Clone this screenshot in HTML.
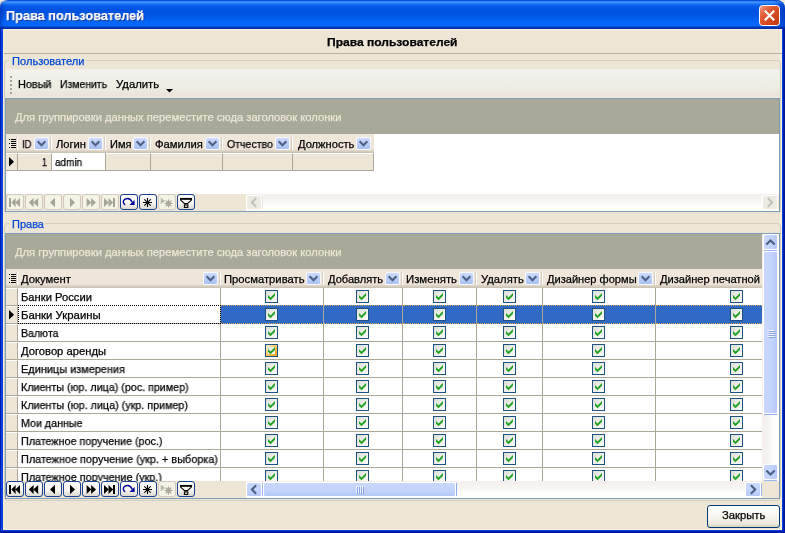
<!DOCTYPE html>
<html><head><meta charset="utf-8"><title>Права пользователей</title>
<style>
html,body{margin:0;padding:0;}
body{width:785px;height:533px;overflow:hidden;position:relative;background:#0a3fe4;font-family:"Liberation Sans",sans-serif;font-size:11px;color:#000;}
div,span,svg{position:absolute;box-sizing:border-box;}
.t{white-space:nowrap;line-height:13px;height:13px;transform-origin:0 0;will-change:transform;-webkit-text-stroke:0.25px currentColor;}
#corner{left:0;top:0;width:785px;height:10px;background:#f0eedf;}
#title{left:0;top:0;width:785px;height:29px;border-radius:8px 8px 0 0;background:linear-gradient(#0a4fd8 0,#0a4fd8 1px,#2f84f8 1.5px,#3a90ff 2.5px,#1c72f4 4px,#0a63ee 5px,#0358e6 7px,#0053e0 11px,#0055e4 15px,#025ef0 19px,#0468fa 23px,#0566f8 25.5px,#0050dc 26.5px,#0038b8 27.5px,#002a9e 29px);}
#title:after{content:"";position:absolute;right:0;top:0;width:12px;height:29px;border-radius:0 8px 0 0;background:linear-gradient(90deg,rgba(0,40,170,0),rgba(0,40,170,.55));}
#title:before{content:"";position:absolute;left:0;top:0;width:5px;height:29px;border-radius:8px 0 0 0;background:linear-gradient(90deg,rgba(0,40,170,.5),rgba(0,40,170,0));}
#client{left:3px;top:29px;width:779px;height:501px;background:#ede5d6;border-left:1px solid #f6ecd0;border-top:1px solid #f6f0de;border-right:2px solid #faf1d8;border-bottom:1px solid #f7eeda;}
.grid{background:#fff;border:1px solid #7f9db9;overflow:hidden;}
.gp{left:0;top:0;height:35px;background-color:#a9a999;}
.gpt{color:#ebe5d6;}
.hdr{background:linear-gradient(#eee7da 0,#ede5d8 15px,#d9d2c4 17px,#c5c0b0 19px);height:19px;}
.hs{width:2px;height:13px;background:linear-gradient(90deg,#d3ccbf 0 1px,#fff 1px 2px);}
.cell{border-right:1px solid #aca899;border-bottom:1px solid #aca899;height:18px;background:#fff;}
.ind{background:#ede5d6;border-top:1px solid #fff;}
.nb{width:18px;height:16px;border:1px solid #d2c9bd;border-radius:3px;background:#f4f3e6;}
.nb.on{border:1px solid #1a4190;background:linear-gradient(#fff 0%,#f4f3ee 60%,#dddad0 100%);}
.sbb{width:16px;height:16px;border:1px solid #fff;border-radius:2px;}
.blue{background:linear-gradient(135deg,#cbd9fd,#b3c6f6);}
.dis{background:#eceae2;}
</style></head><body>
<svg width="0" height="0" style="position:absolute"><defs>
<linearGradient id="cbg" x1="0" y1="0" x2="1" y2="1"><stop offset="0" stop-color="#dcdcd5"/><stop offset="1" stop-color="#ffffff"/></linearGradient>
<linearGradient id="ddg" x1="0" y1="0" x2="0" y2="1"><stop offset="0" stop-color="#cddbfb"/><stop offset="1" stop-color="#a9c1f2"/></linearGradient>
<pattern id="dots" x="0" y="0" width="8" height="8" patternUnits="userSpaceOnUse"><rect x="2" y="3" width="1" height="1" fill="#b3b3a3"/></pattern>
<linearGradient id="sbv" x1="0" y1="0" x2="1" y2="0"><stop offset="0" stop-color="#c9d7fc"/><stop offset="0.6" stop-color="#c3d3fc"/><stop offset="1" stop-color="#b4c7f7"/></linearGradient>
<linearGradient id="sbh" x1="0" y1="0" x2="0" y2="1"><stop offset="0" stop-color="#c9d7fc"/><stop offset="0.6" stop-color="#c3d3fc"/><stop offset="1" stop-color="#b4c7f7"/></linearGradient>
<linearGradient id="hotg" x1="0" y1="0" x2="1" y2="1"><stop offset="0" stop-color="#fff0c8"/><stop offset="0.5" stop-color="#fbc95c"/><stop offset="1" stop-color="#f5a822"/></linearGradient>
<linearGradient id="xg" x1="0" y1="0" x2="1" y2="1"><stop offset="0" stop-color="#f0a08a"/><stop offset="0.35" stop-color="#e25a34"/><stop offset="1" stop-color="#bd340e"/></linearGradient>
</defs></svg>
<div id="corner"></div>
<div id="title"></div>

<div class="t " id="ttxt" style="left:6.2px;top:8px;transform:scaleX(0.9429);color:#fff;font-weight:bold;font-size:13.5px;line-height:16px;height:16px;text-shadow:1px 1px 0 #0a2a90;">Права пользователей</div>
<div id="client"></div>
<div style="left:0;top:29px;width:1px;height:504px;background:#001fae;"></div>
<div style="left:783px;top:29px;width:2px;height:504px;background:linear-gradient(90deg,#0024b4,#00148e);"></div>
<div style="left:0;top:531px;width:785px;height:2px;background:linear-gradient(#0024b4,#00148e);"></div>
<svg style="left:759px;top:5px" width="21" height="21" viewBox="0 0 21 21"><rect x="0.5" y="0.5" width="20" height="20" rx="3" fill="url(#xg)" stroke="#fff"/><path d="M5.8 5.8 L15.2 15.2 M15.2 5.8 L5.8 15.2" stroke="#fff" stroke-width="2.1"/></svg>
<div class="t " id="hp" style="left:326.5px;top:36px;transform:scaleX(1.0943);font-weight:bold;">Права пользователей</div>
<div style="left:4px;top:53px;width:778px;height:1px;background:#b4b4a0;"></div>
<div style="left:4px;top:60px;width:777px;height:154px;border:1px solid #d0d0bf;border-bottom-color:#e4e0d2;border-radius:4px;"></div>
<div style="left:9px;top:58px;width:77px;height:5px;background:#ede5d6;"></div>
<div class="t " id="g1" style="left:11.5px;top:55px;transform:scaleX(1.0098);color:#0046d5;">Пользователи</div>
<div style="left:6px;top:69px;width:774px;height:29px;background:linear-gradient(#f0ede6 0%,#f2f2ec 10%,#efefe7 35%,#ededE2 65%,#ebe6db 85%,#ebe3d9 93%,#f1ede5 100%);"></div>
<div style="left:10px;top:76px;width:2px;height:18px;background:repeating-linear-gradient(#a5a392 0 2px,transparent 2px 4px);"></div>
<div class="t " id="tb1" style="left:18.3px;top:78px;transform:scaleX(0.9833);">Новый</div>
<div class="t " id="tb2" style="left:60px;top:78px;transform:scaleX(0.9471);">Изменить</div>
<div class="t " id="tb3" style="left:116px;top:78px;transform:scaleX(1.0286);">Удалить</div>
<svg style="left:166px;top:89px" width="7" height="4"><path d="M0 0 H7 L3.5 3.5Z" fill="#000"/></svg>
<div class="grid" style="left:5px;top:98px;width:775px;height:114px;">
<div class="gp" style="width:773px;"><svg width="773" height="35" style="left:0;top:0"><rect width="773" height="35" fill="url(#dots)"/></svg></div>
<div class="hdr" style="left:0;top:35px;width:368px;"></div>
</div>
<div class="t gpt" id="gp1" style="left:15px;top:111px;transform:scaleX(1.0164);">Для группировки данных переместите сюда заголовок колонки</div>
<svg style="left:9px;top:139px" width="7" height="9"><path d="M0 0.5h1M0 4.5h1M0 8.5h1M2 0.5h5M2 2.5h5M2 4.5h5M2 6.5h5M2 8.5h5" stroke="#000"/></svg>
<div class="cell ind" style="left:6px;top:153px;width:12px;"></div>
<div class="hs" style="left:16px;top:137px;"></div>
<div class="t " id="h1_1" style="left:21.6px;top:138px;transform:scaleX(0.8545);">ID</div>
<svg style="left:34px;top:137px" width="15" height="13" viewBox="0 0 15 13"><rect x="0" y="0" width="15" height="13" rx="2" fill="#f6f8fd"/><rect x="1" y="1" width="13" height="11" rx="1.5" fill="url(#ddg)"/><path d="M3.6 4.3 L7.5 8.2 L11.4 4.3" fill="none" stroke="#4d6185" stroke-width="2.1"/></svg>
<div class="cell ind" style="left:18px;top:153px;width:34px;"></div>
<div class="hs" style="left:50px;top:137px;"></div>
<div class="t " id="h1_2" style="left:56px;top:138px;transform:scaleX(1.0143);">Логин</div>
<svg style="left:88px;top:137px" width="15" height="13" viewBox="0 0 15 13"><rect x="0" y="0" width="15" height="13" rx="2" fill="#f6f8fd"/><rect x="1" y="1" width="13" height="11" rx="1.5" fill="url(#ddg)"/><path d="M3.6 4.3 L7.5 8.2 L11.4 4.3" fill="none" stroke="#4d6185" stroke-width="2.1"/></svg>
<div class="cell" style="left:52px;top:153px;width:54px;"></div>
<div class="hs" style="left:104px;top:137px;"></div>
<div class="t " id="h1_3" style="left:109.5px;top:138px;transform:scaleX(1.0029);">Имя</div>
<svg style="left:133px;top:137px" width="15" height="13" viewBox="0 0 15 13"><rect x="0" y="0" width="15" height="13" rx="2" fill="#f6f8fd"/><rect x="1" y="1" width="13" height="11" rx="1.5" fill="url(#ddg)"/><path d="M3.6 4.3 L7.5 8.2 L11.4 4.3" fill="none" stroke="#4d6185" stroke-width="2.1"/></svg>
<div class="cell ind" style="left:106px;top:153px;width:45px;"></div>
<div class="hs" style="left:149px;top:137px;"></div>
<div class="t " id="h1_4" style="left:154.6px;top:138px;transform:scaleX(1.0253);">Фамилия</div>
<svg style="left:205px;top:137px" width="15" height="13" viewBox="0 0 15 13"><rect x="0" y="0" width="15" height="13" rx="2" fill="#f6f8fd"/><rect x="1" y="1" width="13" height="11" rx="1.5" fill="url(#ddg)"/><path d="M3.6 4.3 L7.5 8.2 L11.4 4.3" fill="none" stroke="#4d6185" stroke-width="2.1"/></svg>
<div class="cell ind" style="left:151px;top:153px;width:72px;"></div>
<div class="hs" style="left:221px;top:137px;"></div>
<div class="t " id="h1_5" style="left:226.7px;top:138px;transform:scaleX(0.9597);">Отчество</div>
<svg style="left:275px;top:137px" width="15" height="13" viewBox="0 0 15 13"><rect x="0" y="0" width="15" height="13" rx="2" fill="#f6f8fd"/><rect x="1" y="1" width="13" height="11" rx="1.5" fill="url(#ddg)"/><path d="M3.6 4.3 L7.5 8.2 L11.4 4.3" fill="none" stroke="#4d6185" stroke-width="2.1"/></svg>
<div class="cell ind" style="left:223px;top:153px;width:70px;"></div>
<div class="hs" style="left:291px;top:137px;"></div>
<div class="t " id="h1_6" style="left:297.6px;top:138px;transform:scaleX(1.0128);">Должность</div>
<svg style="left:356px;top:137px" width="15" height="13" viewBox="0 0 15 13"><rect x="0" y="0" width="15" height="13" rx="2" fill="#f6f8fd"/><rect x="1" y="1" width="13" height="11" rx="1.5" fill="url(#ddg)"/><path d="M3.6 4.3 L7.5 8.2 L11.4 4.3" fill="none" stroke="#4d6185" stroke-width="2.1"/></svg>
<div class="cell ind" style="left:293px;top:153px;width:81px;"></div>
<svg style="left:9px;top:157px" width="6" height="10"><path d="M0 0 L5 4.7 L0 9.4Z" fill="#000"/></svg>
<div class="t " id="c_1" style="left:42px;top:156px;transform:scaleX(0.8163);">1</div>
<div class="t " id="c_admin" style="left:54.8px;top:156px;transform:scaleX(0.9076);">admin</div>
<div style="left:6px;top:194px;width:240px;height:17px;background:#ede5d6;"></div>
<div class="nb" style="left:6px;top:194px;"><svg style="left:-1px;top:-1px" width="18" height="16" viewBox="0 0 18 16" fill="#a6a594"><rect x="3" y="4" width="2" height="9"/><path d="M5.3 8.5 L9.6 4 V13Z"/><path d="M9.3 8.5 L14 4 V13Z"/></svg></div>
<div class="nb" style="left:25px;top:194px;"><svg style="left:-1px;top:-1px" width="18" height="16" viewBox="0 0 18 16" fill="#a6a594"><path d="M3.8 8.5 L8.6 4 V13Z"/><path d="M8.3 8.5 L13.2 4 V13Z"/></svg></div>
<div class="nb" style="left:44px;top:194px;"><svg style="left:-1px;top:-1px" width="18" height="16" viewBox="0 0 18 16" fill="#a6a594"><path d="M6 8.5 L11 3.7 V13.3Z"/></svg></div>
<div class="nb" style="left:63px;top:194px;"><svg style="left:-1px;top:-1px" width="18" height="16" viewBox="0 0 18 16" fill="#a6a594"><path d="M7 3.7 L12 8.5 L7 13.3Z"/></svg></div>
<div class="nb" style="left:82px;top:194px;"><svg style="left:-1px;top:-1px" width="18" height="16" viewBox="0 0 18 16" fill="#a6a594"><path d="M4.6 4 L9.4 8.5 L4.6 13Z"/><path d="M9.1 4 L14 8.5 L9.1 13Z"/></svg></div>
<div class="nb" style="left:101px;top:194px;"><svg style="left:-1px;top:-1px" width="18" height="16" viewBox="0 0 18 16" fill="#a6a594"><path d="M3 4 L7.8 8.5 L3 13Z"/><path d="M7.5 4 L12.2 8.5 L7.5 13Z"/><rect x="12" y="4" width="2" height="9"/></svg></div>
<div class="nb on" style="left:120px;top:194px;"><svg style="left:-1px;top:-1px" width="18" height="16" viewBox="0 0 18 16" fill="#000"><path d="M5.2 10.8 C2.8 9.6 2.6 6.4 5 5.2 C7.6 4 10.6 5 12.2 8.2" fill="none" stroke="#00009c" stroke-width="1.4"/><path d="M9.4 10.9 H14.6 V6Z" fill="#00009c"/></svg></div>
<div class="nb on" style="left:139px;top:194px;"><svg style="left:-1px;top:-1px" width="18" height="16" viewBox="0 0 18 16" fill="#000"><path d="M4 8.5 H13 M8.5 4 V13 M5.3 5.3 L11.7 11.7 M11.7 5.3 L5.3 11.7" fill="none" stroke="#000" stroke-width="1.1"/><circle cx="8.5" cy="8.5" r="1.6"/></svg></div>
<div class="nb" style="left:158px;top:194px;"><svg style="left:-1px;top:-1px" width="18" height="16" viewBox="0 0 18 16" fill="#a6a594"><path d="M2.8 3.6 L7 7 L2.8 10.2Z" fill="#b9b8a6"/><path d="M6.5 9.5 H14.5 M10.5 5.5 V13.5 M7.7 6.7 L13.3 12.3 M13.3 6.7 L7.7 12.3" fill="none" stroke="#a9a897" stroke-width="1.2"/><circle cx="10.5" cy="9.5" r="2.3" fill="#a9a897"/></svg></div>
<div class="nb on" style="left:177px;top:194px;"><svg style="left:-1px;top:-1px" width="18" height="16" viewBox="0 0 18 16" fill="#000"><path d="M3.6 5 H14.4 V6.1 L10.4 9.6 H7.6 L3.6 6.1Z" fill="none" stroke="#000" stroke-width="1.1"/><path d="M3 4.8 H15" stroke="#000" stroke-width="1.7"/><rect x="7.4" y="10.9" width="3.4" height="2.5" fill="none" stroke="#000" stroke-width="1.1"/></svg></div>
<div style="left:246px;top:194px;width:533px;height:17px;background:linear-gradient(#f6efec 0%,#f6f4f1 35%,#fefefa 70%,#fefefb 100%);"></div>
<div style="left:4px;top:223px;width:777px;height:278px;border:1px solid #d0d0bf;border-radius:4px;"></div>
<div style="left:9px;top:221px;width:36px;height:5px;background:#ede5d6;"></div>
<div class="t " id="g2" style="left:11.5px;top:218px;transform:scaleX(0.9942);color:#0046d5;">Права</div>
<div class="grid" style="left:5px;top:233px;width:775px;height:266px;"></div>
<div style="left:6px;top:234px;width:756px;height:247px;overflow:hidden;" id="g2c">
<div class="gp" style="width:757px;"><svg width="757" height="35" style="left:0;top:0"><rect width="757" height="35" fill="url(#dots)"/></svg></div>
<div class="hdr" style="left:0;top:35px;width:757px;"></div>
<div class="cell ind" style="left:0px;top:54px;width:12px;"></div>
<div class="cell" style="left:12px;top:54px;width:203px;"></div>
<div class="cell" style="left:215px;top:54px;width:103px;"></div>
<svg class="cb" style="left:259px;top:56px" width="13" height="13" viewBox="0 0 13 13"><rect x="0.5" y="0.5" width="12" height="12" fill="url(#cbg)" stroke="#1c5180"/><path d="M3 5 L5.5 7.5 L10 3 L10 5.8 L5.5 10.3 L3 7.8 Z" fill="#21a121"/></svg>
<div class="cell" style="left:318px;top:54px;width:79px;"></div>
<svg class="cb" style="left:350px;top:56px" width="13" height="13" viewBox="0 0 13 13"><rect x="0.5" y="0.5" width="12" height="12" fill="url(#cbg)" stroke="#1c5180"/><path d="M3 5 L5.5 7.5 L10 3 L10 5.8 L5.5 10.3 L3 7.8 Z" fill="#21a121"/></svg>
<div class="cell" style="left:397px;top:54px;width:74px;"></div>
<svg class="cb" style="left:427px;top:56px" width="13" height="13" viewBox="0 0 13 13"><rect x="0.5" y="0.5" width="12" height="12" fill="url(#cbg)" stroke="#1c5180"/><path d="M3 5 L5.5 7.5 L10 3 L10 5.8 L5.5 10.3 L3 7.8 Z" fill="#21a121"/></svg>
<div class="cell" style="left:471px;top:54px;width:66px;"></div>
<svg class="cb" style="left:497px;top:56px" width="13" height="13" viewBox="0 0 13 13"><rect x="0.5" y="0.5" width="12" height="12" fill="url(#cbg)" stroke="#1c5180"/><path d="M3 5 L5.5 7.5 L10 3 L10 5.8 L5.5 10.3 L3 7.8 Z" fill="#21a121"/></svg>
<div class="cell" style="left:537px;top:54px;width:113px;"></div>
<svg class="cb" style="left:586px;top:56px" width="13" height="13" viewBox="0 0 13 13"><rect x="0.5" y="0.5" width="12" height="12" fill="url(#cbg)" stroke="#1c5180"/><path d="M3 5 L5.5 7.5 L10 3 L10 5.8 L5.5 10.3 L3 7.8 Z" fill="#21a121"/></svg>
<div class="cell" style="left:650px;top:54px;width:162px;"></div>
<svg class="cb" style="left:724px;top:56px" width="13" height="13" viewBox="0 0 13 13"><rect x="0.5" y="0.5" width="12" height="12" fill="url(#cbg)" stroke="#1c5180"/><path d="M3 5 L5.5 7.5 L10 3 L10 5.8 L5.5 10.3 L3 7.8 Z" fill="#21a121"/></svg>
<div class="cell ind" style="left:0px;top:72px;width:12px;"></div>
<div class="cell" style="left:12px;top:71px;width:203px;outline:1px dotted #000;outline-offset:-1px;height:19px;"></div>
<div class="cell" style="left:215px;top:71px;width:103px;background:#316ac5;border-top:1px dotted #d9a048;border-bottom:1px dotted #d9a048;height:19px;"></div>
<svg class="cb" style="left:259px;top:74px" width="13" height="13" viewBox="0 0 13 13"><rect x="0.5" y="0.5" width="12" height="12" fill="url(#cbg)" stroke="#1c5180"/><path d="M3 5 L5.5 7.5 L10 3 L10 5.8 L5.5 10.3 L3 7.8 Z" fill="#21a121"/></svg>
<div class="cell" style="left:318px;top:71px;width:79px;background:#316ac5;border-top:1px dotted #d9a048;border-bottom:1px dotted #d9a048;height:19px;"></div>
<svg class="cb" style="left:350px;top:74px" width="13" height="13" viewBox="0 0 13 13"><rect x="0.5" y="0.5" width="12" height="12" fill="url(#cbg)" stroke="#1c5180"/><path d="M3 5 L5.5 7.5 L10 3 L10 5.8 L5.5 10.3 L3 7.8 Z" fill="#21a121"/></svg>
<div class="cell" style="left:397px;top:71px;width:74px;background:#316ac5;border-top:1px dotted #d9a048;border-bottom:1px dotted #d9a048;height:19px;"></div>
<svg class="cb" style="left:427px;top:74px" width="13" height="13" viewBox="0 0 13 13"><rect x="0.5" y="0.5" width="12" height="12" fill="url(#cbg)" stroke="#1c5180"/><path d="M3 5 L5.5 7.5 L10 3 L10 5.8 L5.5 10.3 L3 7.8 Z" fill="#21a121"/></svg>
<div class="cell" style="left:471px;top:71px;width:66px;background:#316ac5;border-top:1px dotted #d9a048;border-bottom:1px dotted #d9a048;height:19px;"></div>
<svg class="cb" style="left:497px;top:74px" width="13" height="13" viewBox="0 0 13 13"><rect x="0.5" y="0.5" width="12" height="12" fill="url(#cbg)" stroke="#1c5180"/><path d="M3 5 L5.5 7.5 L10 3 L10 5.8 L5.5 10.3 L3 7.8 Z" fill="#21a121"/></svg>
<div class="cell" style="left:537px;top:71px;width:113px;background:#316ac5;border-top:1px dotted #d9a048;border-bottom:1px dotted #d9a048;height:19px;"></div>
<svg class="cb" style="left:586px;top:74px" width="13" height="13" viewBox="0 0 13 13"><rect x="0.5" y="0.5" width="12" height="12" fill="url(#cbg)" stroke="#1c5180"/><path d="M3 5 L5.5 7.5 L10 3 L10 5.8 L5.5 10.3 L3 7.8 Z" fill="#21a121"/></svg>
<div class="cell" style="left:650px;top:71px;width:162px;background:#316ac5;border-top:1px dotted #d9a048;border-bottom:1px dotted #d9a048;height:19px;"></div>
<svg class="cb" style="left:724px;top:74px" width="13" height="13" viewBox="0 0 13 13"><rect x="0.5" y="0.5" width="12" height="12" fill="url(#cbg)" stroke="#1c5180"/><path d="M3 5 L5.5 7.5 L10 3 L10 5.8 L5.5 10.3 L3 7.8 Z" fill="#21a121"/></svg>
<svg style="left:3px;top:76px" width="6" height="10"><path d="M0 0 L5 4.7 L0 9.4Z" fill="#000"/></svg>
<div class="cell ind" style="left:0px;top:90px;width:12px;"></div>
<div class="cell" style="left:12px;top:90px;width:203px;"></div>
<div class="cell" style="left:215px;top:90px;width:103px;"></div>
<svg class="cb" style="left:259px;top:92px" width="13" height="13" viewBox="0 0 13 13"><rect x="0.5" y="0.5" width="12" height="12" fill="url(#cbg)" stroke="#1c5180"/><path d="M3 5 L5.5 7.5 L10 3 L10 5.8 L5.5 10.3 L3 7.8 Z" fill="#21a121"/></svg>
<div class="cell" style="left:318px;top:90px;width:79px;"></div>
<svg class="cb" style="left:350px;top:92px" width="13" height="13" viewBox="0 0 13 13"><rect x="0.5" y="0.5" width="12" height="12" fill="url(#cbg)" stroke="#1c5180"/><path d="M3 5 L5.5 7.5 L10 3 L10 5.8 L5.5 10.3 L3 7.8 Z" fill="#21a121"/></svg>
<div class="cell" style="left:397px;top:90px;width:74px;"></div>
<svg class="cb" style="left:427px;top:92px" width="13" height="13" viewBox="0 0 13 13"><rect x="0.5" y="0.5" width="12" height="12" fill="url(#cbg)" stroke="#1c5180"/><path d="M3 5 L5.5 7.5 L10 3 L10 5.8 L5.5 10.3 L3 7.8 Z" fill="#21a121"/></svg>
<div class="cell" style="left:471px;top:90px;width:66px;"></div>
<svg class="cb" style="left:497px;top:92px" width="13" height="13" viewBox="0 0 13 13"><rect x="0.5" y="0.5" width="12" height="12" fill="url(#cbg)" stroke="#1c5180"/><path d="M3 5 L5.5 7.5 L10 3 L10 5.8 L5.5 10.3 L3 7.8 Z" fill="#21a121"/></svg>
<div class="cell" style="left:537px;top:90px;width:113px;"></div>
<svg class="cb" style="left:586px;top:92px" width="13" height="13" viewBox="0 0 13 13"><rect x="0.5" y="0.5" width="12" height="12" fill="url(#cbg)" stroke="#1c5180"/><path d="M3 5 L5.5 7.5 L10 3 L10 5.8 L5.5 10.3 L3 7.8 Z" fill="#21a121"/></svg>
<div class="cell" style="left:650px;top:90px;width:162px;"></div>
<svg class="cb" style="left:724px;top:92px" width="13" height="13" viewBox="0 0 13 13"><rect x="0.5" y="0.5" width="12" height="12" fill="url(#cbg)" stroke="#1c5180"/><path d="M3 5 L5.5 7.5 L10 3 L10 5.8 L5.5 10.3 L3 7.8 Z" fill="#21a121"/></svg>
<div class="cell ind" style="left:0px;top:108px;width:12px;"></div>
<div class="cell" style="left:12px;top:108px;width:203px;"></div>
<div class="cell" style="left:215px;top:108px;width:103px;"></div>
<svg class="cb" style="left:259px;top:110px" width="13" height="13" viewBox="0 0 13 13"><rect x="0.5" y="0.5" width="12" height="12" fill="url(#cbg)" stroke="#1c5180"/><rect x="1.5" y="1.5" width="10" height="10" fill="none" stroke="url(#hotg)" stroke-width="1"/><rect x="2.5" y="2.5" width="8" height="8" fill="none" stroke="url(#hotg)" stroke-width="1"/><path d="M3 5 L5.5 7.5 L10 3 L10 5.8 L5.5 10.3 L3 7.8 Z" fill="#21a121"/></svg>
<div class="cell" style="left:318px;top:108px;width:79px;"></div>
<svg class="cb" style="left:350px;top:110px" width="13" height="13" viewBox="0 0 13 13"><rect x="0.5" y="0.5" width="12" height="12" fill="url(#cbg)" stroke="#1c5180"/><path d="M3 5 L5.5 7.5 L10 3 L10 5.8 L5.5 10.3 L3 7.8 Z" fill="#21a121"/></svg>
<div class="cell" style="left:397px;top:108px;width:74px;"></div>
<svg class="cb" style="left:427px;top:110px" width="13" height="13" viewBox="0 0 13 13"><rect x="0.5" y="0.5" width="12" height="12" fill="url(#cbg)" stroke="#1c5180"/><path d="M3 5 L5.5 7.5 L10 3 L10 5.8 L5.5 10.3 L3 7.8 Z" fill="#21a121"/></svg>
<div class="cell" style="left:471px;top:108px;width:66px;"></div>
<svg class="cb" style="left:497px;top:110px" width="13" height="13" viewBox="0 0 13 13"><rect x="0.5" y="0.5" width="12" height="12" fill="url(#cbg)" stroke="#1c5180"/><path d="M3 5 L5.5 7.5 L10 3 L10 5.8 L5.5 10.3 L3 7.8 Z" fill="#21a121"/></svg>
<div class="cell" style="left:537px;top:108px;width:113px;"></div>
<svg class="cb" style="left:586px;top:110px" width="13" height="13" viewBox="0 0 13 13"><rect x="0.5" y="0.5" width="12" height="12" fill="url(#cbg)" stroke="#1c5180"/><path d="M3 5 L5.5 7.5 L10 3 L10 5.8 L5.5 10.3 L3 7.8 Z" fill="#21a121"/></svg>
<div class="cell" style="left:650px;top:108px;width:162px;"></div>
<svg class="cb" style="left:724px;top:110px" width="13" height="13" viewBox="0 0 13 13"><rect x="0.5" y="0.5" width="12" height="12" fill="url(#cbg)" stroke="#1c5180"/><path d="M3 5 L5.5 7.5 L10 3 L10 5.8 L5.5 10.3 L3 7.8 Z" fill="#21a121"/></svg>
<div class="cell ind" style="left:0px;top:126px;width:12px;"></div>
<div class="cell" style="left:12px;top:126px;width:203px;"></div>
<div class="cell" style="left:215px;top:126px;width:103px;"></div>
<svg class="cb" style="left:259px;top:128px" width="13" height="13" viewBox="0 0 13 13"><rect x="0.5" y="0.5" width="12" height="12" fill="url(#cbg)" stroke="#1c5180"/><path d="M3 5 L5.5 7.5 L10 3 L10 5.8 L5.5 10.3 L3 7.8 Z" fill="#21a121"/></svg>
<div class="cell" style="left:318px;top:126px;width:79px;"></div>
<svg class="cb" style="left:350px;top:128px" width="13" height="13" viewBox="0 0 13 13"><rect x="0.5" y="0.5" width="12" height="12" fill="url(#cbg)" stroke="#1c5180"/><path d="M3 5 L5.5 7.5 L10 3 L10 5.8 L5.5 10.3 L3 7.8 Z" fill="#21a121"/></svg>
<div class="cell" style="left:397px;top:126px;width:74px;"></div>
<svg class="cb" style="left:427px;top:128px" width="13" height="13" viewBox="0 0 13 13"><rect x="0.5" y="0.5" width="12" height="12" fill="url(#cbg)" stroke="#1c5180"/><path d="M3 5 L5.5 7.5 L10 3 L10 5.8 L5.5 10.3 L3 7.8 Z" fill="#21a121"/></svg>
<div class="cell" style="left:471px;top:126px;width:66px;"></div>
<svg class="cb" style="left:497px;top:128px" width="13" height="13" viewBox="0 0 13 13"><rect x="0.5" y="0.5" width="12" height="12" fill="url(#cbg)" stroke="#1c5180"/><path d="M3 5 L5.5 7.5 L10 3 L10 5.8 L5.5 10.3 L3 7.8 Z" fill="#21a121"/></svg>
<div class="cell" style="left:537px;top:126px;width:113px;"></div>
<svg class="cb" style="left:586px;top:128px" width="13" height="13" viewBox="0 0 13 13"><rect x="0.5" y="0.5" width="12" height="12" fill="url(#cbg)" stroke="#1c5180"/><path d="M3 5 L5.5 7.5 L10 3 L10 5.8 L5.5 10.3 L3 7.8 Z" fill="#21a121"/></svg>
<div class="cell" style="left:650px;top:126px;width:162px;"></div>
<svg class="cb" style="left:724px;top:128px" width="13" height="13" viewBox="0 0 13 13"><rect x="0.5" y="0.5" width="12" height="12" fill="url(#cbg)" stroke="#1c5180"/><path d="M3 5 L5.5 7.5 L10 3 L10 5.8 L5.5 10.3 L3 7.8 Z" fill="#21a121"/></svg>
<div class="cell ind" style="left:0px;top:144px;width:12px;"></div>
<div class="cell" style="left:12px;top:144px;width:203px;"></div>
<div class="cell" style="left:215px;top:144px;width:103px;"></div>
<svg class="cb" style="left:259px;top:146px" width="13" height="13" viewBox="0 0 13 13"><rect x="0.5" y="0.5" width="12" height="12" fill="url(#cbg)" stroke="#1c5180"/><path d="M3 5 L5.5 7.5 L10 3 L10 5.8 L5.5 10.3 L3 7.8 Z" fill="#21a121"/></svg>
<div class="cell" style="left:318px;top:144px;width:79px;"></div>
<svg class="cb" style="left:350px;top:146px" width="13" height="13" viewBox="0 0 13 13"><rect x="0.5" y="0.5" width="12" height="12" fill="url(#cbg)" stroke="#1c5180"/><path d="M3 5 L5.5 7.5 L10 3 L10 5.8 L5.5 10.3 L3 7.8 Z" fill="#21a121"/></svg>
<div class="cell" style="left:397px;top:144px;width:74px;"></div>
<svg class="cb" style="left:427px;top:146px" width="13" height="13" viewBox="0 0 13 13"><rect x="0.5" y="0.5" width="12" height="12" fill="url(#cbg)" stroke="#1c5180"/><path d="M3 5 L5.5 7.5 L10 3 L10 5.8 L5.5 10.3 L3 7.8 Z" fill="#21a121"/></svg>
<div class="cell" style="left:471px;top:144px;width:66px;"></div>
<svg class="cb" style="left:497px;top:146px" width="13" height="13" viewBox="0 0 13 13"><rect x="0.5" y="0.5" width="12" height="12" fill="url(#cbg)" stroke="#1c5180"/><path d="M3 5 L5.5 7.5 L10 3 L10 5.8 L5.5 10.3 L3 7.8 Z" fill="#21a121"/></svg>
<div class="cell" style="left:537px;top:144px;width:113px;"></div>
<svg class="cb" style="left:586px;top:146px" width="13" height="13" viewBox="0 0 13 13"><rect x="0.5" y="0.5" width="12" height="12" fill="url(#cbg)" stroke="#1c5180"/><path d="M3 5 L5.5 7.5 L10 3 L10 5.8 L5.5 10.3 L3 7.8 Z" fill="#21a121"/></svg>
<div class="cell" style="left:650px;top:144px;width:162px;"></div>
<svg class="cb" style="left:724px;top:146px" width="13" height="13" viewBox="0 0 13 13"><rect x="0.5" y="0.5" width="12" height="12" fill="url(#cbg)" stroke="#1c5180"/><path d="M3 5 L5.5 7.5 L10 3 L10 5.8 L5.5 10.3 L3 7.8 Z" fill="#21a121"/></svg>
<div class="cell ind" style="left:0px;top:162px;width:12px;"></div>
<div class="cell" style="left:12px;top:162px;width:203px;"></div>
<div class="cell" style="left:215px;top:162px;width:103px;"></div>
<svg class="cb" style="left:259px;top:164px" width="13" height="13" viewBox="0 0 13 13"><rect x="0.5" y="0.5" width="12" height="12" fill="url(#cbg)" stroke="#1c5180"/><path d="M3 5 L5.5 7.5 L10 3 L10 5.8 L5.5 10.3 L3 7.8 Z" fill="#21a121"/></svg>
<div class="cell" style="left:318px;top:162px;width:79px;"></div>
<svg class="cb" style="left:350px;top:164px" width="13" height="13" viewBox="0 0 13 13"><rect x="0.5" y="0.5" width="12" height="12" fill="url(#cbg)" stroke="#1c5180"/><path d="M3 5 L5.5 7.5 L10 3 L10 5.8 L5.5 10.3 L3 7.8 Z" fill="#21a121"/></svg>
<div class="cell" style="left:397px;top:162px;width:74px;"></div>
<svg class="cb" style="left:427px;top:164px" width="13" height="13" viewBox="0 0 13 13"><rect x="0.5" y="0.5" width="12" height="12" fill="url(#cbg)" stroke="#1c5180"/><path d="M3 5 L5.5 7.5 L10 3 L10 5.8 L5.5 10.3 L3 7.8 Z" fill="#21a121"/></svg>
<div class="cell" style="left:471px;top:162px;width:66px;"></div>
<svg class="cb" style="left:497px;top:164px" width="13" height="13" viewBox="0 0 13 13"><rect x="0.5" y="0.5" width="12" height="12" fill="url(#cbg)" stroke="#1c5180"/><path d="M3 5 L5.5 7.5 L10 3 L10 5.8 L5.5 10.3 L3 7.8 Z" fill="#21a121"/></svg>
<div class="cell" style="left:537px;top:162px;width:113px;"></div>
<svg class="cb" style="left:586px;top:164px" width="13" height="13" viewBox="0 0 13 13"><rect x="0.5" y="0.5" width="12" height="12" fill="url(#cbg)" stroke="#1c5180"/><path d="M3 5 L5.5 7.5 L10 3 L10 5.8 L5.5 10.3 L3 7.8 Z" fill="#21a121"/></svg>
<div class="cell" style="left:650px;top:162px;width:162px;"></div>
<svg class="cb" style="left:724px;top:164px" width="13" height="13" viewBox="0 0 13 13"><rect x="0.5" y="0.5" width="12" height="12" fill="url(#cbg)" stroke="#1c5180"/><path d="M3 5 L5.5 7.5 L10 3 L10 5.8 L5.5 10.3 L3 7.8 Z" fill="#21a121"/></svg>
<div class="cell ind" style="left:0px;top:180px;width:12px;"></div>
<div class="cell" style="left:12px;top:180px;width:203px;"></div>
<div class="cell" style="left:215px;top:180px;width:103px;"></div>
<svg class="cb" style="left:259px;top:182px" width="13" height="13" viewBox="0 0 13 13"><rect x="0.5" y="0.5" width="12" height="12" fill="url(#cbg)" stroke="#1c5180"/><path d="M3 5 L5.5 7.5 L10 3 L10 5.8 L5.5 10.3 L3 7.8 Z" fill="#21a121"/></svg>
<div class="cell" style="left:318px;top:180px;width:79px;"></div>
<svg class="cb" style="left:350px;top:182px" width="13" height="13" viewBox="0 0 13 13"><rect x="0.5" y="0.5" width="12" height="12" fill="url(#cbg)" stroke="#1c5180"/><path d="M3 5 L5.5 7.5 L10 3 L10 5.8 L5.5 10.3 L3 7.8 Z" fill="#21a121"/></svg>
<div class="cell" style="left:397px;top:180px;width:74px;"></div>
<svg class="cb" style="left:427px;top:182px" width="13" height="13" viewBox="0 0 13 13"><rect x="0.5" y="0.5" width="12" height="12" fill="url(#cbg)" stroke="#1c5180"/><path d="M3 5 L5.5 7.5 L10 3 L10 5.8 L5.5 10.3 L3 7.8 Z" fill="#21a121"/></svg>
<div class="cell" style="left:471px;top:180px;width:66px;"></div>
<svg class="cb" style="left:497px;top:182px" width="13" height="13" viewBox="0 0 13 13"><rect x="0.5" y="0.5" width="12" height="12" fill="url(#cbg)" stroke="#1c5180"/><path d="M3 5 L5.5 7.5 L10 3 L10 5.8 L5.5 10.3 L3 7.8 Z" fill="#21a121"/></svg>
<div class="cell" style="left:537px;top:180px;width:113px;"></div>
<svg class="cb" style="left:586px;top:182px" width="13" height="13" viewBox="0 0 13 13"><rect x="0.5" y="0.5" width="12" height="12" fill="url(#cbg)" stroke="#1c5180"/><path d="M3 5 L5.5 7.5 L10 3 L10 5.8 L5.5 10.3 L3 7.8 Z" fill="#21a121"/></svg>
<div class="cell" style="left:650px;top:180px;width:162px;"></div>
<svg class="cb" style="left:724px;top:182px" width="13" height="13" viewBox="0 0 13 13"><rect x="0.5" y="0.5" width="12" height="12" fill="url(#cbg)" stroke="#1c5180"/><path d="M3 5 L5.5 7.5 L10 3 L10 5.8 L5.5 10.3 L3 7.8 Z" fill="#21a121"/></svg>
<div class="cell ind" style="left:0px;top:198px;width:12px;"></div>
<div class="cell" style="left:12px;top:198px;width:203px;"></div>
<div class="cell" style="left:215px;top:198px;width:103px;"></div>
<svg class="cb" style="left:259px;top:200px" width="13" height="13" viewBox="0 0 13 13"><rect x="0.5" y="0.5" width="12" height="12" fill="url(#cbg)" stroke="#1c5180"/><path d="M3 5 L5.5 7.5 L10 3 L10 5.8 L5.5 10.3 L3 7.8 Z" fill="#21a121"/></svg>
<div class="cell" style="left:318px;top:198px;width:79px;"></div>
<svg class="cb" style="left:350px;top:200px" width="13" height="13" viewBox="0 0 13 13"><rect x="0.5" y="0.5" width="12" height="12" fill="url(#cbg)" stroke="#1c5180"/><path d="M3 5 L5.5 7.5 L10 3 L10 5.8 L5.5 10.3 L3 7.8 Z" fill="#21a121"/></svg>
<div class="cell" style="left:397px;top:198px;width:74px;"></div>
<svg class="cb" style="left:427px;top:200px" width="13" height="13" viewBox="0 0 13 13"><rect x="0.5" y="0.5" width="12" height="12" fill="url(#cbg)" stroke="#1c5180"/><path d="M3 5 L5.5 7.5 L10 3 L10 5.8 L5.5 10.3 L3 7.8 Z" fill="#21a121"/></svg>
<div class="cell" style="left:471px;top:198px;width:66px;"></div>
<svg class="cb" style="left:497px;top:200px" width="13" height="13" viewBox="0 0 13 13"><rect x="0.5" y="0.5" width="12" height="12" fill="url(#cbg)" stroke="#1c5180"/><path d="M3 5 L5.5 7.5 L10 3 L10 5.8 L5.5 10.3 L3 7.8 Z" fill="#21a121"/></svg>
<div class="cell" style="left:537px;top:198px;width:113px;"></div>
<svg class="cb" style="left:586px;top:200px" width="13" height="13" viewBox="0 0 13 13"><rect x="0.5" y="0.5" width="12" height="12" fill="url(#cbg)" stroke="#1c5180"/><path d="M3 5 L5.5 7.5 L10 3 L10 5.8 L5.5 10.3 L3 7.8 Z" fill="#21a121"/></svg>
<div class="cell" style="left:650px;top:198px;width:162px;"></div>
<svg class="cb" style="left:724px;top:200px" width="13" height="13" viewBox="0 0 13 13"><rect x="0.5" y="0.5" width="12" height="12" fill="url(#cbg)" stroke="#1c5180"/><path d="M3 5 L5.5 7.5 L10 3 L10 5.8 L5.5 10.3 L3 7.8 Z" fill="#21a121"/></svg>
<div class="cell ind" style="left:0px;top:216px;width:12px;"></div>
<div class="cell" style="left:12px;top:216px;width:203px;"></div>
<div class="cell" style="left:215px;top:216px;width:103px;"></div>
<svg class="cb" style="left:259px;top:218px" width="13" height="13" viewBox="0 0 13 13"><rect x="0.5" y="0.5" width="12" height="12" fill="url(#cbg)" stroke="#1c5180"/><path d="M3 5 L5.5 7.5 L10 3 L10 5.8 L5.5 10.3 L3 7.8 Z" fill="#21a121"/></svg>
<div class="cell" style="left:318px;top:216px;width:79px;"></div>
<svg class="cb" style="left:350px;top:218px" width="13" height="13" viewBox="0 0 13 13"><rect x="0.5" y="0.5" width="12" height="12" fill="url(#cbg)" stroke="#1c5180"/><path d="M3 5 L5.5 7.5 L10 3 L10 5.8 L5.5 10.3 L3 7.8 Z" fill="#21a121"/></svg>
<div class="cell" style="left:397px;top:216px;width:74px;"></div>
<svg class="cb" style="left:427px;top:218px" width="13" height="13" viewBox="0 0 13 13"><rect x="0.5" y="0.5" width="12" height="12" fill="url(#cbg)" stroke="#1c5180"/><path d="M3 5 L5.5 7.5 L10 3 L10 5.8 L5.5 10.3 L3 7.8 Z" fill="#21a121"/></svg>
<div class="cell" style="left:471px;top:216px;width:66px;"></div>
<svg class="cb" style="left:497px;top:218px" width="13" height="13" viewBox="0 0 13 13"><rect x="0.5" y="0.5" width="12" height="12" fill="url(#cbg)" stroke="#1c5180"/><path d="M3 5 L5.5 7.5 L10 3 L10 5.8 L5.5 10.3 L3 7.8 Z" fill="#21a121"/></svg>
<div class="cell" style="left:537px;top:216px;width:113px;"></div>
<svg class="cb" style="left:586px;top:218px" width="13" height="13" viewBox="0 0 13 13"><rect x="0.5" y="0.5" width="12" height="12" fill="url(#cbg)" stroke="#1c5180"/><path d="M3 5 L5.5 7.5 L10 3 L10 5.8 L5.5 10.3 L3 7.8 Z" fill="#21a121"/></svg>
<div class="cell" style="left:650px;top:216px;width:162px;"></div>
<svg class="cb" style="left:724px;top:218px" width="13" height="13" viewBox="0 0 13 13"><rect x="0.5" y="0.5" width="12" height="12" fill="url(#cbg)" stroke="#1c5180"/><path d="M3 5 L5.5 7.5 L10 3 L10 5.8 L5.5 10.3 L3 7.8 Z" fill="#21a121"/></svg>
<div class="cell ind" style="left:0px;top:234px;width:12px;"></div>
<div class="cell" style="left:12px;top:234px;width:203px;"></div>
<div class="cell" style="left:215px;top:234px;width:103px;"></div>
<svg class="cb" style="left:259px;top:236px" width="13" height="13" viewBox="0 0 13 13"><rect x="0.5" y="0.5" width="12" height="12" fill="url(#cbg)" stroke="#1c5180"/><path d="M3 5 L5.5 7.5 L10 3 L10 5.8 L5.5 10.3 L3 7.8 Z" fill="#21a121"/></svg>
<div class="cell" style="left:318px;top:234px;width:79px;"></div>
<svg class="cb" style="left:350px;top:236px" width="13" height="13" viewBox="0 0 13 13"><rect x="0.5" y="0.5" width="12" height="12" fill="url(#cbg)" stroke="#1c5180"/><path d="M3 5 L5.5 7.5 L10 3 L10 5.8 L5.5 10.3 L3 7.8 Z" fill="#21a121"/></svg>
<div class="cell" style="left:397px;top:234px;width:74px;"></div>
<svg class="cb" style="left:427px;top:236px" width="13" height="13" viewBox="0 0 13 13"><rect x="0.5" y="0.5" width="12" height="12" fill="url(#cbg)" stroke="#1c5180"/><path d="M3 5 L5.5 7.5 L10 3 L10 5.8 L5.5 10.3 L3 7.8 Z" fill="#21a121"/></svg>
<div class="cell" style="left:471px;top:234px;width:66px;"></div>
<svg class="cb" style="left:497px;top:236px" width="13" height="13" viewBox="0 0 13 13"><rect x="0.5" y="0.5" width="12" height="12" fill="url(#cbg)" stroke="#1c5180"/><path d="M3 5 L5.5 7.5 L10 3 L10 5.8 L5.5 10.3 L3 7.8 Z" fill="#21a121"/></svg>
<div class="cell" style="left:537px;top:234px;width:113px;"></div>
<svg class="cb" style="left:586px;top:236px" width="13" height="13" viewBox="0 0 13 13"><rect x="0.5" y="0.5" width="12" height="12" fill="url(#cbg)" stroke="#1c5180"/><path d="M3 5 L5.5 7.5 L10 3 L10 5.8 L5.5 10.3 L3 7.8 Z" fill="#21a121"/></svg>
<div class="cell" style="left:650px;top:234px;width:162px;"></div>
<svg class="cb" style="left:724px;top:236px" width="13" height="13" viewBox="0 0 13 13"><rect x="0.5" y="0.5" width="12" height="12" fill="url(#cbg)" stroke="#1c5180"/><path d="M3 5 L5.5 7.5 L10 3 L10 5.8 L5.5 10.3 L3 7.8 Z" fill="#21a121"/></svg>
</div>
<div style="left:6px;top:234px;width:756px;height:247px;overflow:hidden;">
<div class="t " id="r_0" style="left:14.5px;top:57px;transform:scaleX(1.0174);">Банки России</div>
<div class="t " id="r_1" style="left:14.5px;top:75px;transform:scaleX(1.0338);">Банки Украины</div>
<div class="t " id="r_2" style="left:14.5px;top:93px;transform:scaleX(0.9635);">Валюта</div>
<div class="t " id="r_3" style="left:14.5px;top:111px;transform:scaleX(1.0199);">Договор аренды</div>
<div class="t " id="r_4" style="left:14.5px;top:129px;transform:scaleX(0.9936);">Единицы измерения</div>
<div class="t " id="r_5" style="left:14.5px;top:147px;transform:scaleX(0.9733);">Клиенты (юр. лица) (рос. пример)</div>
<div class="t " id="r_6" style="left:14.5px;top:165px;transform:scaleX(0.9771);">Клиенты (юр. лица) (укр. пример)</div>
<div class="t " id="r_7" style="left:14.5px;top:183px;transform:scaleX(0.9711);">Мои данные</div>
<div class="t " id="r_8" style="left:14.5px;top:201px;transform:scaleX(0.9774);">Платежное поручение (рос.)</div>
<div class="t " id="r_9" style="left:14.5px;top:219px;transform:scaleX(0.9872);">Платежное поручение (укр. + выборка)</div>
<div class="t " id="r_10" style="left:14.5px;top:237px;transform:scaleX(0.9821);">Платежное поручение (укр.)</div>
</div>
<div class="t gpt" id="gp2" style="left:15px;top:246px;transform:scaleX(1.0164);">Для группировки данных переместите сюда заголовок колонки</div>
<svg style="left:9px;top:274px" width="7" height="9"><path d="M0 0.5h1M0 4.5h1M0 8.5h1M2 0.5h5M2 2.5h5M2 4.5h5M2 6.5h5M2 8.5h5" stroke="#000"/></svg>
<div class="hs" style="left:16px;top:272px;"></div>
<div class="t " id="h2_1" style="left:21.4px;top:273px;transform:scaleX(1.0226);">Документ</div>
<svg style="left:203px;top:272px" width="15" height="13" viewBox="0 0 15 13"><rect x="0" y="0" width="15" height="13" rx="2" fill="#f6f8fd"/><rect x="1" y="1" width="13" height="11" rx="1.5" fill="url(#ddg)"/><path d="M3.6 4.3 L7.5 8.2 L11.4 4.3" fill="none" stroke="#4d6185" stroke-width="2.1"/></svg>
<div class="hs" style="left:219px;top:272px;"></div>
<div class="t " id="h2_2" style="left:224.2px;top:273px;transform:scaleX(1.0222);">Просматривать</div>
<svg style="left:306px;top:272px" width="15" height="13" viewBox="0 0 15 13"><rect x="0" y="0" width="15" height="13" rx="2" fill="#f6f8fd"/><rect x="1" y="1" width="13" height="11" rx="1.5" fill="url(#ddg)"/><path d="M3.6 4.3 L7.5 8.2 L11.4 4.3" fill="none" stroke="#4d6185" stroke-width="2.1"/></svg>
<div class="hs" style="left:322px;top:272px;"></div>
<div class="t " id="h2_3" style="left:328px;top:273px;transform:scaleX(1.0074);">Добавлять</div>
<svg style="left:385px;top:272px" width="15" height="13" viewBox="0 0 15 13"><rect x="0" y="0" width="15" height="13" rx="2" fill="#f6f8fd"/><rect x="1" y="1" width="13" height="11" rx="1.5" fill="url(#ddg)"/><path d="M3.6 4.3 L7.5 8.2 L11.4 4.3" fill="none" stroke="#4d6185" stroke-width="2.1"/></svg>
<div class="hs" style="left:401px;top:272px;"></div>
<div class="t " id="h2_4" style="left:406px;top:273px;transform:scaleX(1.0316);">Изменять</div>
<svg style="left:459px;top:272px" width="15" height="13" viewBox="0 0 15 13"><rect x="0" y="0" width="15" height="13" rx="2" fill="#f6f8fd"/><rect x="1" y="1" width="13" height="11" rx="1.5" fill="url(#ddg)"/><path d="M3.6 4.3 L7.5 8.2 L11.4 4.3" fill="none" stroke="#4d6185" stroke-width="2.1"/></svg>
<div class="hs" style="left:475px;top:272px;"></div>
<div class="t " id="h2_5" style="left:480.6px;top:273px;transform:scaleX(1.0236);">Удалять</div>
<svg style="left:525px;top:272px" width="15" height="13" viewBox="0 0 15 13"><rect x="0" y="0" width="15" height="13" rx="2" fill="#f6f8fd"/><rect x="1" y="1" width="13" height="11" rx="1.5" fill="url(#ddg)"/><path d="M3.6 4.3 L7.5 8.2 L11.4 4.3" fill="none" stroke="#4d6185" stroke-width="2.1"/></svg>
<div class="hs" style="left:541px;top:272px;"></div>
<div class="t " id="h2_6" style="left:547px;top:273px;transform:scaleX(1.0064);">Дизайнер формы</div>
<svg style="left:638px;top:272px" width="15" height="13" viewBox="0 0 15 13"><rect x="0" y="0" width="15" height="13" rx="2" fill="#f6f8fd"/><rect x="1" y="1" width="13" height="11" rx="1.5" fill="url(#ddg)"/><path d="M3.6 4.3 L7.5 8.2 L11.4 4.3" fill="none" stroke="#4d6185" stroke-width="2.1"/></svg>
<div class="hs" style="left:654px;top:272px;"></div>
<div class="t " id="h2_7" style="left:660px;top:273px;transform:scaleX(1.0104);">Дизайнер печатной</div>
<svg style="left:246px;top:194px" width="17" height="17"><rect x="0" y="1" width="16" height="15" rx="2" fill="#fff"/><rect x="1" y="2" width="14" height="13" rx="1.5" fill="#eceae2"/><rect x="16" y="2" width="1" height="13" fill="#e6e4dc"/><path d="M10.1 4.3 L5.9 8.5 L10.1 12.7" fill="none" stroke="#c3c2ba" stroke-width="2.1"/></svg>
<svg style="left:762px;top:194px" width="17" height="17"><rect x="0" y="1" width="16" height="15" rx="2" fill="#fff"/><rect x="1" y="2" width="14" height="13" rx="1.5" fill="#eceae2"/><rect x="16" y="2" width="1" height="13" fill="#e6e4dc"/><path d="M5.9 4.3 L10.1 8.5 L5.9 12.7" fill="none" stroke="#c3c2ba" stroke-width="2.1"/></svg>
<div style="left:762px;top:234px;width:17px;height:247px;background:linear-gradient(90deg,#f6efec 0%,#f6f4f1 35%,#fefefa 70%,#fefefb 100%);"></div>
<svg style="left:762px;top:234px" width="17" height="17"><rect x="1" y="0" width="15" height="16" rx="2" fill="#fff"/><rect x="2" y="1" width="13" height="14" rx="1.5" fill="url(#sbv)"/><rect x="2" y="16" width="13" height="1" fill="#9db5ee"/><path d="M4.3 10.6 L8.5 6.4 L12.7 10.6" fill="none" stroke="#4d6185" stroke-width="2.1"/></svg>
<svg style="left:762px;top:464px" width="17" height="17"><rect x="1" y="0" width="15" height="16" rx="2" fill="#fff"/><rect x="2" y="1" width="13" height="14" rx="1.5" fill="url(#sbv)"/><rect x="2" y="16" width="13" height="1" fill="#9db5ee"/><path d="M4.3 6.4 L8.5 10.6 L12.7 6.4" fill="none" stroke="#4d6185" stroke-width="2.1"/></svg>
<svg style="left:762px;top:251px" width="17" height="164"><rect x="1" y="0" width="15" height="163" rx="2" fill="#fff"/><rect x="2" y="1" width="13" height="161" rx="1.5" fill="url(#sbv)"/><rect x="2" y="163" width="13" height="1" fill="#8eaaea"/><path d="M5.5 79.5h7M5.5 81.5h7M5.5 83.5h7M5.5 85.5h7" stroke="#eef3ff"/><path d="M6.5 80.5h7M6.5 82.5h7M6.5 84.5h7M6.5 86.5h7" stroke="#8ca4e2"/></svg>
<div style="left:6px;top:481px;width:240px;height:17px;background:#ede5d6;"></div>
<div class="nb on" style="left:6px;top:481px;"><svg style="left:-1px;top:-1px" width="18" height="16" viewBox="0 0 18 16" fill="#000"><rect x="3" y="4" width="2" height="9"/><path d="M5.3 8.5 L9.6 4 V13Z"/><path d="M9.3 8.5 L14 4 V13Z"/></svg></div>
<div class="nb on" style="left:25px;top:481px;"><svg style="left:-1px;top:-1px" width="18" height="16" viewBox="0 0 18 16" fill="#000"><path d="M3.8 8.5 L8.6 4 V13Z"/><path d="M8.3 8.5 L13.2 4 V13Z"/></svg></div>
<div class="nb on" style="left:44px;top:481px;"><svg style="left:-1px;top:-1px" width="18" height="16" viewBox="0 0 18 16" fill="#000"><path d="M6 8.5 L11 3.7 V13.3Z"/></svg></div>
<div class="nb on" style="left:63px;top:481px;"><svg style="left:-1px;top:-1px" width="18" height="16" viewBox="0 0 18 16" fill="#000"><path d="M7 3.7 L12 8.5 L7 13.3Z"/></svg></div>
<div class="nb on" style="left:82px;top:481px;"><svg style="left:-1px;top:-1px" width="18" height="16" viewBox="0 0 18 16" fill="#000"><path d="M4.6 4 L9.4 8.5 L4.6 13Z"/><path d="M9.1 4 L14 8.5 L9.1 13Z"/></svg></div>
<div class="nb on" style="left:101px;top:481px;"><svg style="left:-1px;top:-1px" width="18" height="16" viewBox="0 0 18 16" fill="#000"><path d="M3 4 L7.8 8.5 L3 13Z"/><path d="M7.5 4 L12.2 8.5 L7.5 13Z"/><rect x="12" y="4" width="2" height="9"/></svg></div>
<div class="nb on" style="left:120px;top:481px;"><svg style="left:-1px;top:-1px" width="18" height="16" viewBox="0 0 18 16" fill="#000"><path d="M5.2 10.8 C2.8 9.6 2.6 6.4 5 5.2 C7.6 4 10.6 5 12.2 8.2" fill="none" stroke="#00009c" stroke-width="1.4"/><path d="M9.4 10.9 H14.6 V6Z" fill="#00009c"/></svg></div>
<div class="nb on" style="left:139px;top:481px;"><svg style="left:-1px;top:-1px" width="18" height="16" viewBox="0 0 18 16" fill="#000"><path d="M4 8.5 H13 M8.5 4 V13 M5.3 5.3 L11.7 11.7 M11.7 5.3 L5.3 11.7" fill="none" stroke="#000" stroke-width="1.1"/><circle cx="8.5" cy="8.5" r="1.6"/></svg></div>
<div class="nb" style="left:158px;top:481px;"><svg style="left:-1px;top:-1px" width="18" height="16" viewBox="0 0 18 16" fill="#a6a594"><path d="M2.8 3.6 L7 7 L2.8 10.2Z" fill="#b9b8a6"/><path d="M6.5 9.5 H14.5 M10.5 5.5 V13.5 M7.7 6.7 L13.3 12.3 M13.3 6.7 L7.7 12.3" fill="none" stroke="#a9a897" stroke-width="1.2"/><circle cx="10.5" cy="9.5" r="2.3" fill="#a9a897"/></svg></div>
<div class="nb on" style="left:177px;top:481px;"><svg style="left:-1px;top:-1px" width="18" height="16" viewBox="0 0 18 16" fill="#000"><path d="M3.6 5 H14.4 V6.1 L10.4 9.6 H7.6 L3.6 6.1Z" fill="none" stroke="#000" stroke-width="1.1"/><path d="M3 4.8 H15" stroke="#000" stroke-width="1.7"/><rect x="7.4" y="10.9" width="3.4" height="2.5" fill="none" stroke="#000" stroke-width="1.1"/></svg></div>
<div style="left:246px;top:481px;width:516px;height:17px;background:linear-gradient(#f6efec 0%,#f6f4f1 35%,#fefefa 70%,#fefefb 100%);"></div>
<svg style="left:246px;top:481px" width="17" height="17"><rect x="0" y="1" width="16" height="15" rx="2" fill="#fff"/><rect x="1" y="2" width="14" height="13" rx="1.5" fill="url(#sbh)"/><rect x="16" y="2" width="1" height="13" fill="#9db5ee"/><path d="M10.1 4.3 L5.9 8.5 L10.1 12.7" fill="none" stroke="#4d6185" stroke-width="2.1"/></svg>
<svg style="left:745px;top:481px" width="17" height="17"><rect x="0" y="1" width="16" height="15" rx="2" fill="#fff"/><rect x="1" y="2" width="14" height="13" rx="1.5" fill="url(#sbh)"/><rect x="16" y="2" width="1" height="13" fill="#9db5ee"/><path d="M5.9 4.3 L10.1 8.5 L5.9 12.7" fill="none" stroke="#4d6185" stroke-width="2.1"/></svg>
<svg style="left:263px;top:481px" width="194" height="17"><rect x="0" y="1" width="193" height="15" rx="2" fill="#fff"/><rect x="1" y="2" width="191" height="13" rx="1.5" fill="url(#sbh)"/><rect x="193" y="2" width="1" height="13" fill="#8eaaea"/><path d="M93.5 5v7M95.5 5v7M97.5 5v7M99.5 5v7" stroke="#eef3ff"/><path d="M94.5 6v7M96.5 6v7M98.5 6v7M100.5 6v7" stroke="#8ca4e2"/></svg>
<div style="left:762px;top:481px;width:17px;height:17px;background:#ede5d6;"></div>
<div style="left:707px;top:505px;width:73px;height:23px;border:1px solid #003c74;border-radius:3px;background:linear-gradient(#fff 0%,#f6f5ef 50%,#ebe8dc 85%,#d6d0c0 100%);"></div>
<div class="t " id="bclose" style="left:722px;top:509px;transform:scaleX(1.0218);">Закрыть</div>
</body></html>
